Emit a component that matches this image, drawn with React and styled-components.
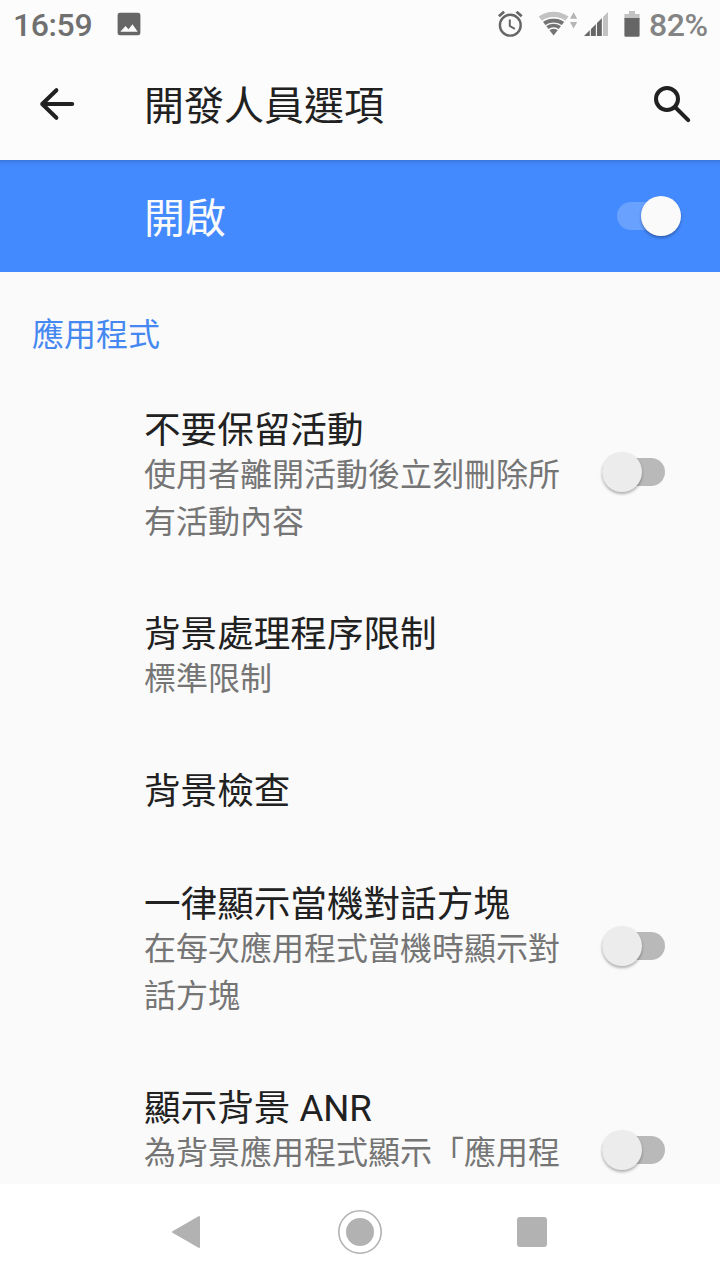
import React from 'react'
import styled, { createGlobalStyle } from 'styled-components'

const GlobalStyle = createGlobalStyle`
    * {
        box-sizing: border-box;
    }

    body {
        margin: 0;
        background: #fafafa;
        font-family: Roboto, "Noto Sans CJK TC", sans-serif;
        color: #212121;
    }
`

const Screen = styled.div`
    display: flex;
    flex-direction: column;
    width: 720px;
    height: 1280px;
    overflow: hidden;
`

const StatusBar = styled.div`
    display: flex;
    align-items: center;
    height: 48px;
    padding: 0 12px 0 13px;
    background: #fcfcfc;
    flex-shrink: 0;
`

const Clock = styled.span`
    width: 80px;
    margin-right: 24px;
    font-size: 32px;
    font-weight: 500;
    line-height: 50px;
    letter-spacing: -0.4px;
    color: #707070;
    height: 48px;
`

const StatusIcons = styled.div`
    display: flex;
    align-items: center;
    margin-left: auto;
`

const Battery = styled.span`
    width: 59px;
    margin-left: 9px;
    font-size: 32px;
    font-weight: 500;
    line-height: 50px;
    letter-spacing: -0.5px;
    white-space: nowrap;
    height: 48px;
    color: #848484;
`

const AppBar = styled.header`
    display: flex;
    align-items: center;
    height: 112px;
    padding: 0 28px 0 38px;
    background: #fcfcfc;
    flex-shrink: 0;
`

const AppTitle = styled.h1`
    flex: 1;
    margin: 0 0 0 68px;
    padding-top: 5px;
    font-size: 40px;
    font-weight: 400;
    line-height: 56px;
`

const MasterRow = styled.div`
    display: flex;
    align-items: center;
    justify-content: space-between;
    height: 112px;
    padding: 0 39px 0 144px;
    background: #448aff;
    box-shadow: inset 0 5px 4px -3px rgba(0, 0, 0, 0.16);
    color: #fafafa;
    font-size: 41px;
    flex-shrink: 0;
`

const MasterLabel = styled.span`
    padding-bottom: 3px;
`

const Content = styled.main`
    flex: 1;
    min-height: 0;
    overflow: hidden;
`

const Category = styled.h2`
    margin: 0;
    padding: 39px 32px 11px;
    height: 98px;
    font-size: 32px;
    font-weight: 400;
    line-height: 48px;
    color: #4688f1;
`

const Row = styled.div`
    display: flex;
    align-items: center;
    min-height: ${props => props.$tall ? '204px' : '0'};
    padding: 0 55px 0 144px;
`

const RowText = styled.div`
    align-self: flex-start;
    width: 420px;
    margin-right: 36px;
    padding: 36px 0 28px;
`

const RowTitle = styled.div`
    font-size: 36.6px;
    line-height: 49px;
    white-space: nowrap;
`

const Summary = styled.div`
    margin-top: -3px;
    font-size: 32px;
    line-height: 47px;
    color: #757575;
`

const Track = styled.div`
    display: flex;
    align-items: center;
    justify-content: ${props => props.$on ? 'flex-end' : 'flex-start'};
    width: ${props => props.$on ? '64px' : '63.5px'};
    height: 28px;
    border-radius: 14px;
    background: ${props => props.$on ? 'rgba(255, 255, 255, 0.2)' : '#b9b9b9'};
    margin-left: ${props => props.$on ? '0' : '1.5px'};
`

const Thumb = styled.div`
    width: 40px;
    height: 40px;
    border-radius: 50%;
    flex-shrink: 0;
    background: ${props => props.$on ? '#fafafa' : '#ececec'};
    box-shadow: 0 2px 3px rgba(0, 0, 0, 0.3);
`

const NavBar = styled.nav`
    display: flex;
    align-items: center;
    justify-content: space-between;
    height: 96px;
    padding: 0 173px 0 171px;
    background: #fff;
    flex-shrink: 0;
`

const ImageIcon = () => (
    <svg width="24" height="24" viewBox="0 0 24 24">
        <path fillRule="evenodd" fill="#666" d="M3 .7h18a2.4 2.4 0 0 1 2.4 2.4v17.8a2.4 2.4 0 0 1-2.4 2.4H3a2.4 2.4 0 0 1-2.4-2.4V3.1A2.4 2.4 0 0 1 3 .7zM3.3 19.8h17.4l-5.2-7.6-4 5.1-3-3.2z" />
    </svg>
)

const AlarmIcon = () => (
    <svg width="26" height="26" viewBox="0 0 26 26" fill="none" stroke="#666">
        <circle cx="13.3" cy="14.2" r="10.4" strokeWidth="2.4" />
        <path d="M1.9 5.2l5.2-4.4M24.7 5.2l-5.2-4.4" strokeWidth="2.8" />
        <path d="M12.8 8.4v6.6l5 2.9" strokeWidth="2" />
    </svg>
)

const WifiIcon = styled(({ className }) => (
    <svg className={className} width="40" height="26" viewBox="0 0 40 26">
        <path fill="#c2c2c2" d="M.6 5.4C9.5-.9 21.5-.9 30.6 5.4L26.9 10C20 5.2 11 5.2 4.3 10z" />
        <path fill="#747474" d="M4.9 10.7c6.4-4.5 15-4.5 21.4 0L15.6 24.4z" />
        <path fill="none" stroke="#fcfcfc" strokeWidth="1.3" d="M3.6 10.7c7.2-5.3 16.8-5.3 24 0M7 14.9c5.2-3.8 12-3.8 17.2 0M10.3 19c3.2-2.4 7.4-2.4 10.6 0" />
        <path fill="#b4b4b4" d="M35.6 1.2l3.6 6.6H32zM35.6 17.6L32 11h7.2z" />
    </svg>
))`
    margin: 0 6px 1px 15px;
`

const SignalIcon = () => (
    <svg width="24" height="24" viewBox="0 0 24 24">
        <path fill="#666" d="M0 24L18 6v18z" />
        <path fill="#c2c2c2" d="M19 5l5-5v24h-5z" />
        <path stroke="#fcfcfc" strokeWidth="1.1" d="M6.3 8v16M12.4 6v18M18.4 3v21" />
    </svg>
)

const BatteryIcon = styled(({ className }) => (
    <svg className={className} width="16" height="26" viewBox="0 0 16 26">
        <path fill="#c2c2c2" d="M5 0h6v3h4.6v5H.4V3H5z" />
        <path fill="#666" d="M.4 7h15.2v17.4q0 1.3-1.3 1.3H1.7Q.4 25.7.4 24.4z" />
    </svg>
))`
    margin-left: 16px;
`

const BackArrow = () => (
    <svg width="38" height="36" viewBox="0 0 38 36" fill="none" stroke="#212121" strokeWidth="4">
        <path d="M18.4 4.2L4.2 18l14.2 13.8M4.2 18h30" strokeLinecap="round" strokeLinejoin="round" />
    </svg>
)

const SearchIcon = () => (
    <svg width="40" height="40" viewBox="0 0 40 40" fill="none" stroke="#212121" strokeWidth="4">
        <circle cx="15" cy="15" r="11" />
        <path d="M23.5 23.5L36.2 36.2" strokeLinecap="round" />
    </svg>
)

const Switch = ({ on }) => (
    <Track $on={on}>
        <Thumb $on={on} />
    </Track>
)

const settings = [
    { title: '不要保留活動', summary: '使用者離開活動後立刻刪除所有活動內容', toggle: true },
    { title: '背景處理程序限制', summary: '標準限制' },
    { title: '背景檢查' },
    { title: '一律顯示當機對話方塊', summary: '在每次應用程式當機時顯示對話方塊', toggle: true },
    { title: '顯示背景 ANR', summary: '為背景應用程式顯示「應用程', toggle: true },
]

const App = () => {
    return (
        <Screen lang="zh-Hant-TW">
            <GlobalStyle />
            <StatusBar>
                <Clock>16:59</Clock>
                <ImageIcon />
                <StatusIcons>
                    <AlarmIcon />
                    <WifiIcon />
                    <SignalIcon />
                    <BatteryIcon />
                    <Battery>82%</Battery>
                </StatusIcons>
            </StatusBar>
            <AppBar>
                <BackArrow />
                <AppTitle>開發人員選項</AppTitle>
                <SearchIcon />
            </AppBar>
            <MasterRow>
                <MasterLabel>開啟</MasterLabel>
                <Switch on />
            </MasterRow>
            <Content>
                <Category>應用程式</Category>
                {settings.map((s, i) => {
                    return (
                        <Row key={i} $tall={s.toggle}>
                            <RowText>
                                <RowTitle>{s.title}</RowTitle>
                                {s.summary && <Summary>{s.summary}</Summary>}
                            </RowText>
                            {s.toggle && <Switch />}
                        </Row>
                    )
                })}
            </Content>
            <NavBar>
                <svg width="32" height="34" viewBox="0 0 32 34">
                    <path d="M2 17L28 2v30z" fill="#b2b2b2" stroke="#b2b2b2" strokeWidth="2" strokeLinejoin="round" />
                </svg>
                <svg width="44" height="44" viewBox="0 0 44 44">
                    <circle cx="22" cy="22" r="21.2" fill="none" stroke="#b2b2b2" strokeWidth="1.6" />
                    <circle cx="22" cy="22" r="14" fill="#b2b2b2" />
                </svg>
                <svg width="30" height="30" viewBox="0 0 30 30">
                    <rect width="30" height="30" rx="3" fill="#b2b2b2" />
                </svg>
            </NavBar>
        </Screen>
    )
}

export default App
